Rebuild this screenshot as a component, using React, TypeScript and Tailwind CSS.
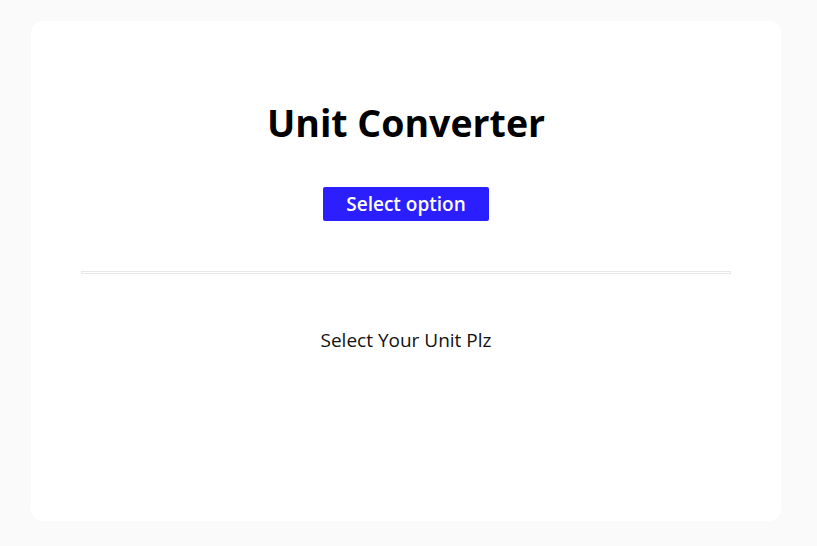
export default function App() {
  return (
    <main className="min-h-screen bg-[#fafafa] px-[31px] pt-[21px] font-['Open_Sans',sans-serif]">
      <div className="flex h-[500px] w-[750px] flex-col items-center rounded-xl bg-white px-[50px]">
        <h1 className="mt-[74px] text-[37.5px] font-bold leading-[56px] text-black">Unit Converter</h1>
        <button className="mt-[36px] flex h-[34px] w-[166px] items-center justify-center rounded-[2px] bg-[#2b1fff] text-[19px] font-semibold text-white">
          Select option
        </button>
        <div className="mt-[50px] h-[3px] w-full border border-[#e8e8e8]" />
        <p className="mt-[52px] text-[19px] leading-[28px] text-[#111]">Select Your Unit Plz</p>
      </div>
    </main>
  );
}
